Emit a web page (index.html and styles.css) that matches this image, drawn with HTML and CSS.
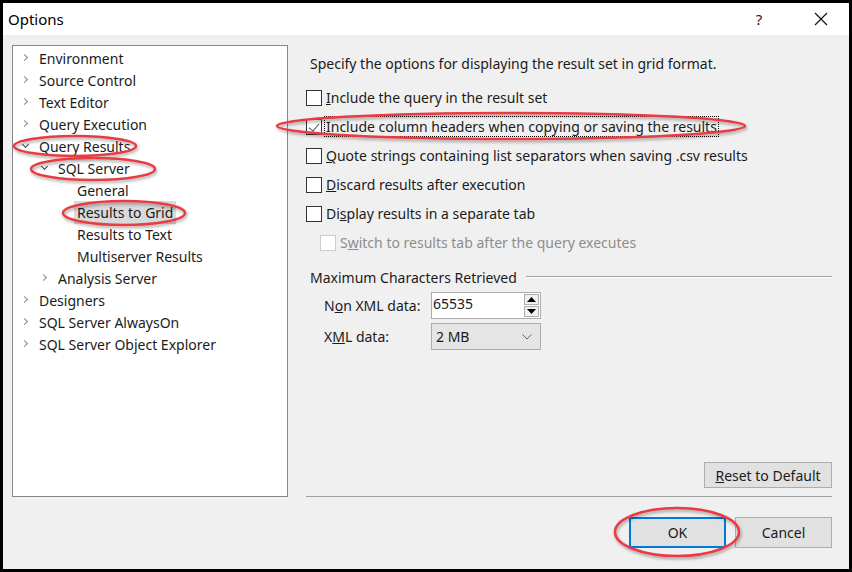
FILE: index.html
```html
<!DOCTYPE html>
<html>
<head>
    <title>Options</title>
    <link rel="stylesheet" href="styles.css">
</head>
<body>
    <div class="window">
        <div class="titlebar">
            <span class="title">Options</span>
            <span class="help">?</span>
            <span class="close">
                <svg width="14" height="14" viewBox="0 0 14 14"><path d="M1 1L13 13M13 1L1 13" stroke="#111" stroke-width="1.2"/></svg>
            </span>
        </div>

        <div class="main">
            <div class="tree">
                <div class="node"><span class="arrow closed"></span>Environment</div>
                <div class="node"><span class="arrow closed"></span>Source Control</div>
                <div class="node"><span class="arrow closed"></span>Text Editor</div>
                <div class="node"><span class="arrow closed"></span>Query Execution</div>
                <div class="node"><span class="arrow open"></span>Query Results</div>
                <div class="node lvl1"><span class="arrow open"></span>SQL Server</div>
                <div class="node lvl2"><span class="arrow"></span>General</div>
                <div class="node lvl2"><span class="arrow"></span><span class="selected">Results to Grid</span></div>
                <div class="node lvl2"><span class="arrow"></span>Results to Text</div>
                <div class="node lvl2"><span class="arrow"></span>Multiserver Results</div>
                <div class="node lvl1"><span class="arrow closed"></span>Analysis Server</div>
                <div class="node"><span class="arrow closed"></span>Designers</div>
                <div class="node"><span class="arrow closed"></span>SQL Server AlwaysOn</div>
                <div class="node"><span class="arrow closed"></span>SQL Server Object Explorer</div>
            </div>

            <div class="panel">
                <p class="desc">Specify the options for displaying the result set in grid format.</p>

                <div class="check"><span class="box"></span><span class="label"><u>I</u>nclude the query in the result set</span></div>
                <div class="check"><span class="box checked"></span><span class="label focus"><u>I</u>nclude column headers when copying or saving the results</span></div>
                <div class="check"><span class="box"></span><span class="label"><u>Q</u>uote strings containing list separators when saving .csv results</span></div>
                <div class="check"><span class="box"></span><span class="label"><u>D</u>iscard results after execution</span></div>
                <div class="check"><span class="box"></span><span class="label">Di<u>s</u>play results in a separate tab</span></div>
                <div class="check sub disabled"><span class="box"></span><span class="label">S<u>w</u>itch to results tab after the query executes</span></div>

                <div class="group-title"><span>Maximum Characters Retrieved</span><div class="group-line"></div></div>

                <div class="field">
                    <span class="field-label">N<u>o</u>n XML data:</span>
                    <div class="spin">
                        <span class="spin-value">65535</span>
                        <div class="spin-btns">
                            <span class="spin-btn"><svg width="9" height="5" viewBox="0 0 9 5"><path d="M0 5L4.5 0L9 5Z" fill="#000"/></svg></span>
                            <span class="spin-btn"><svg width="9" height="5" viewBox="0 0 9 5"><path d="M0 0L4.5 5L9 0Z" fill="#000"/></svg></span>
                        </div>
                    </div>
                </div>
                <div class="field">
                    <span class="field-label">X<u>M</u>L data:</span>
                    <div class="combo">
                        <span>2 MB</span>
                        <svg width="10" height="6" viewBox="0 0 10 6"><path d="M0.5 0.5L5 5L9.5 0.5" fill="none" stroke="#666" stroke-width="1"/></svg>
                    </div>
                </div>

                <div class="panel-bottom">
                    <button class="btn reset"><u>R</u>eset to Default</button>
                </div>
            </div>
        </div>

        <div class="footer">
            <button class="btn default">OK</button>
            <button class="btn">Cancel</button>
        </div>

        <svg class="marks" width="852" height="572" viewBox="0 0 852 572">
            <defs>
                <filter id="shadow" x="-10%" y="-50%" width="120%" height="200%">
                    <feDropShadow dx="1" dy="2" stdDeviation="1.5" flood-color="#000" flood-opacity="0.35"/>
                </filter>
            </defs>
            <g fill="none" stroke="#e83a42" stroke-width="2.5" filter="url(#shadow)">
                <ellipse cx="75" cy="146" rx="61" ry="10"/>
                <ellipse cx="93" cy="169" rx="62" ry="11"/>
                <ellipse cx="124" cy="213" rx="61" ry="12"/>
                <ellipse cx="511" cy="126" rx="234" ry="13"/>
                <ellipse cx="677" cy="532" rx="62" ry="24"/>
            </g>
        </svg>
    </div>
</body>
</html>
```

FILE: styles.css
```css
html, body {
    margin: 0;
    padding: 0;
    background: #000;
}
body {
    font-family: "Noto Sans", "Open Sans", sans-serif;
    font-size: 14px;
    color: #1b1b1b;
}
.window {
    position: relative;
    box-sizing: border-box;
    width: 852px;
    height: 572px;
    border: 3px solid #000;
    background: #f0f0f0;
    overflow: hidden;
}
.titlebar {
    height: 32px;
    background: #fff;
    display: flex;
    align-items: center;
    padding-left: 5px;
}
.title {
    font-size: 15px;
    flex: 1;
    color: #000;
}
.help {
    width: 40px;
    text-align: center;
    font-size: 15px;
    margin-right: 17px;
}
.close {
    width: 50px;
    display: flex;
    justify-content: center;
    margin-right: 3px;
}

.main {
    display: flex;
    gap: 18px;
    padding: 10px 17px 0 9px;
}
.tree {
    box-sizing: border-box;
    width: 276px;
    height: 452px;
    background: #fff;
    border: 1px solid #828790;
    padding-top: 1px;
}
.node {
    height: 22px;
    display: flex;
    align-items: center;
    padding-left: 7px;
    white-space: nowrap;
}
.node.lvl1 { padding-left: 26px; }
.node.lvl2 { padding-left: 45px; }
.arrow {
    width: 19px;
    height: 22px;
    flex: none;
    position: relative;
}
.arrow.closed::before,
.arrow.open::before {
    content: "";
    position: absolute;
    width: 4px;
    height: 4px;
    border-right: 1.5px solid #8a8a8a;
    border-bottom: 1.5px solid #8a8a8a;
}
.arrow.closed::before {
    left: 2px;
    top: 8px;
    transform: rotate(-45deg);
}
.arrow.open::before {
    left: 3px;
    top: 7px;
    border-color: #404040;
    transform: rotate(45deg);
}
.selected {
    background: #dadada;
    padding: 2px 3px;
    margin-left: -3px;
}

.panel {
    flex: 1;
    height: 452px;
    display: flex;
    flex-direction: column;
    border-bottom: 1px solid #a0a0a0;
    box-sizing: border-box;
}
.desc {
    margin: 8px 0 8px 4px;
    line-height: 22px;
}
.check {
    height: 29px;
    display: flex;
    align-items: center;
    white-space: nowrap;
}
.check.sub { padding-left: 14px; }
.box {
    box-sizing: border-box;
    width: 16px;
    height: 16px;
    border: 1px solid #333;
    background: #fff;
    margin-right: 2px;
    position: relative;
    flex: none;
}
.box.checked::after {
    content: "";
    position: absolute;
    left: 4px;
    top: 1px;
    width: 5px;
    height: 9px;
    border-right: 1.5px solid #555;
    border-bottom: 1.5px solid #555;
    transform: rotate(40deg);
}
.label {
    padding: 0 1px;
    border: 1px dotted transparent;
}
.label.focus { border-color: #000; }
.disabled { color: #8d8d8d; }
.disabled .box { border-color: #cccccc; }

.group-title {
    display: flex;
    align-items: center;
    gap: 9px;
    margin: 9px 0 2px 4px;
    height: 22px;
}
.group-line {
    flex: 1;
    height: 1px;
    background: #a0a0a0;
    border-bottom: 1px solid #fff;
}
.field {
    display: flex;
    align-items: center;
    height: 31px;
    padding-left: 18px;
}
.field-label { width: 107px; }
.spin {
    box-sizing: border-box;
    width: 110px;
    height: 27px;
    border: 1px solid #adadad;
    background: #fff;
    display: flex;
}
.spin-value {
    flex: 1;
    padding-left: 1px;
    line-height: 22px;
}
.spin-btns {
    width: 15px;
    display: flex;
    flex-direction: column;
    gap: 1px;
    padding: 1px;
}
.spin-btn {
    flex: 1;
    border: 1px solid #adadad;
    background: #f0f0f0;
    display: flex;
    align-items: center;
    justify-content: center;
}
.combo {
    box-sizing: border-box;
    width: 110px;
    height: 27px;
    border: 1px solid #adadad;
    background: #e5e5e5;
    display: flex;
    align-items: center;
    justify-content: space-between;
    padding: 0 8px 0 4px;
}

.panel-bottom {
    margin-top: auto;
    display: flex;
    justify-content: flex-end;
    padding-bottom: 8px;
}
.btn {
    font-family: inherit;
    font-size: 14px;
    color: #1b1b1b;
    background: #e1e1e1;
    border: 1px solid #adadad;
    width: 97px;
    height: 31px;
    padding: 0;
}
.btn.reset {
    width: 128px;
    height: 26px;
}
.btn.default {
    border: 2px solid #0078d7;
}
.footer {
    display: flex;
    justify-content: flex-end;
    gap: 9px;
    padding: 20px 17px 0 0;
}
.marks {
    position: absolute;
    left: -3px;
    top: -3px;
    pointer-events: none;
}
```
